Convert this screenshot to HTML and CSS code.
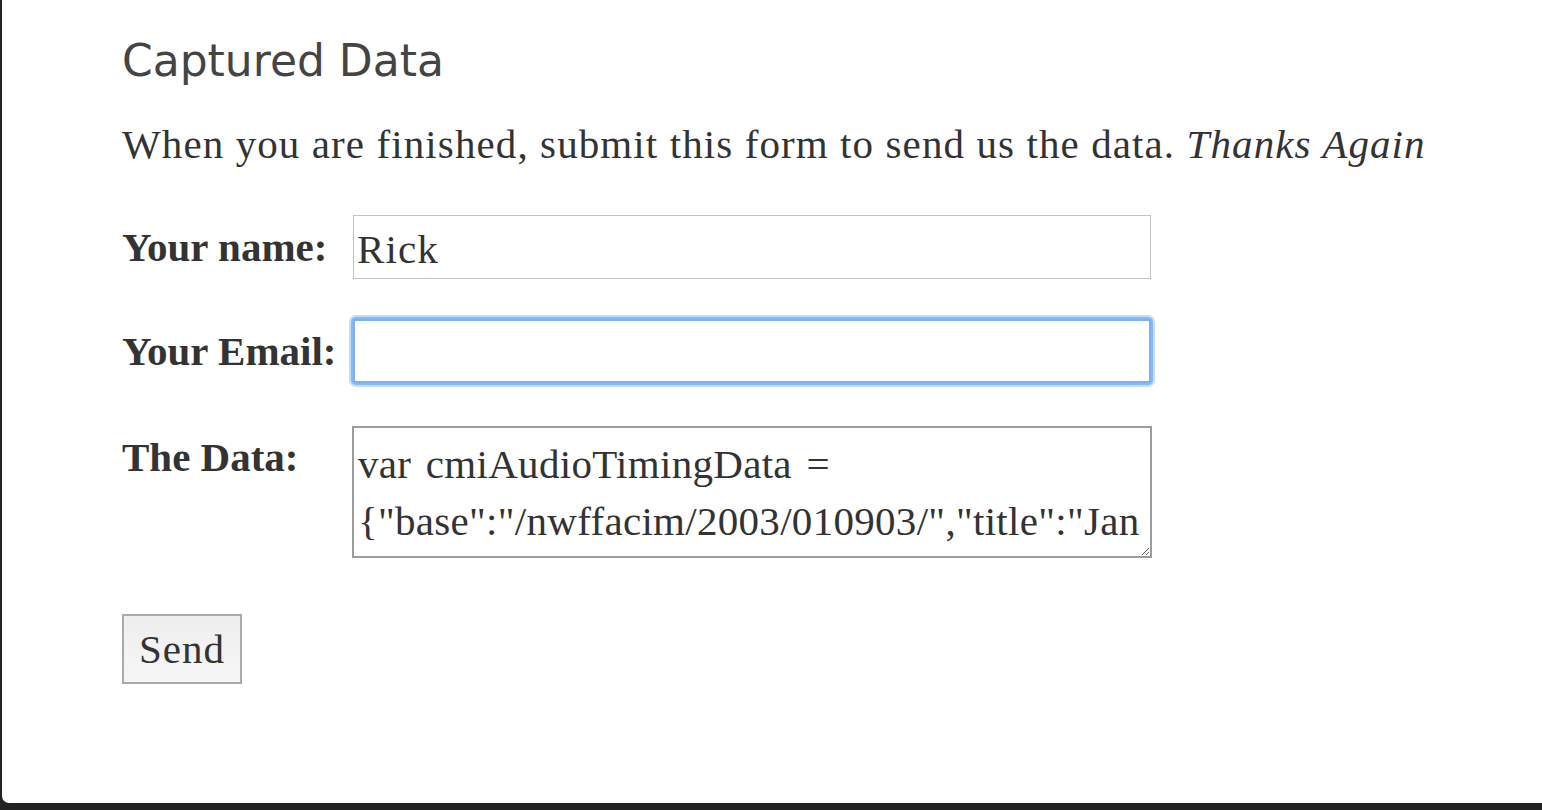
FILE: index.html
```html
<!DOCTYPE html>
<html>
<head>
<meta charset="utf-8">
<link rel="stylesheet" href="styles.css">
</head>
<body>
<div class="panel">
  <h1 class="title">Captured Data</h1>
  <p class="intro">When you are finished, submit this form to send us the data. <em>Thanks Again</em></p>
  <form class="form">
    <div class="row row-center">
      <label class="label" for="name">Your name:</label>
      <input class="field" id="name" type="text" value="Rick">
    </div>
    <div class="row row-center">
      <label class="label" for="email">Your Email:</label>
      <input class="field field-focus" id="email" type="text" value="">
    </div>
    <div class="row row-top">
      <label class="label label-top" for="data">The Data:</label>
      <textarea class="area" id="data">var cmiAudioTimingData = {"base":"/nwffacim/2003/010903/","title":"Jan 9 2003","sections":[]}</textarea>
    </div>
    <button class="send" type="button">Send</button>
  </form>
</div>
</body>
</html>
```

FILE: styles.css
```css
html, body {
  margin: 0;
  padding: 0;
  background: #222222;
  height: 810px;
  overflow: hidden;
}

.panel {
  margin-left: 2px;
  height: 803px;
  background: #ffffff;
  border-bottom-left-radius: 7px;
  padding: 31px 0 0 120px;
  box-sizing: border-box;
  color: #333333;
  font-family: "Liberation Serif", serif;
}

.title {
  margin: 0;
  font-family: "DejaVu Sans", sans-serif;
  font-weight: normal;
  font-size: 44px;
  line-height: 60px;
  color: #444444;
}

.intro {
  margin: 28px 0 0 0;
  font-size: 41px;
  line-height: 50px;
  letter-spacing: 1.1px;
}

.intro em {
  font-style: italic;
}

.form {
  margin-top: 46px;
  display: flex;
  flex-direction: column;
  gap: 40px;
  align-items: flex-start;
}

.row {
  display: flex;
}

.row-center {
  align-items: center;
}

.row-top {
  align-items: flex-start;
  margin-top: 3px;
}

.label {
  width: 231px;
  font-weight: bold;
  font-size: 41px;
  color: #333333;
}

.label-top {
  padding-top: 7px;
}

.field {
  width: 798px;
  height: 64px;
  box-sizing: border-box;
  border: 1px solid #c3c3c3;
  padding: 4px 3px 0 3px;
  font-family: "Liberation Serif", serif;
  font-size: 41px;
  letter-spacing: 1.1px;
  color: #333333;
  background: #fff;
  outline: none;
  margin: 0;
}

.field-focus {
  border: 2px solid #7cb1f5;
  box-shadow: 0 0 0 2px #86b9f6, 0 0 0 4px #c4ddfb;
  border-radius: 3px;
}

.area {
  width: 800px;
  height: 132px;
  margin: 0 0 0 -1px;
  box-sizing: border-box;
  border: 2px solid #9c9c9c;
  padding: 8px 4px 0 4px;
  font-family: "Liberation Serif", serif;
  font-size: 41px;
  line-height: 57px;
  letter-spacing: 0.3px;
  word-spacing: 4px;
  color: #333333;
  resize: vertical;
  overflow: hidden;
  outline: none;
}

.send {
  margin-top: 16px;
  width: 120px;
  height: 70px;
  border: 2px solid #aaaaaa;
  background: linear-gradient(#eeeeee, #f6f6f6);
  font-family: "Liberation Serif", serif;
  font-size: 41px;
  letter-spacing: 1px;
  color: #333333;
  padding: 0;
}
```
